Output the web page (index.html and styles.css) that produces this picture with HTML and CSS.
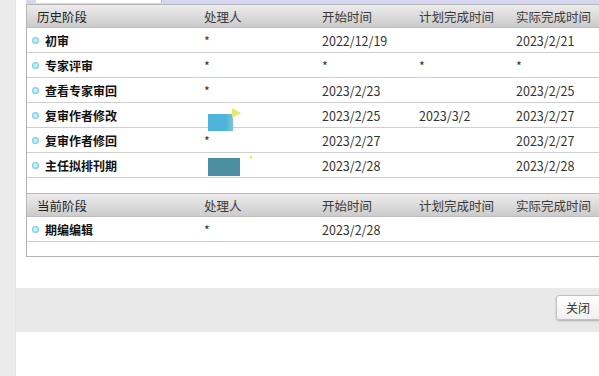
FILE: index.html
```html
<!DOCTYPE html>
<html lang="zh">
<head>
<meta charset="utf-8">
<link rel="stylesheet" href="styles.css">
</head>
<body>
<div class="page">
  <div class="side"></div>
  <div class="main">
    <div class="topbar"><div class="tab"></div></div>
    <div class="panel">
      <div class="row head">
        <div class="c1">历史阶段</div><div class="c2">处理人</div><div class="c3">开始时间</div><div class="c4">计划完成时间</div><div class="c5">实际完成时间</div>
      </div>
      <div class="row">
        <div class="c1 stage"><span class="dot"></span>初审</div><div class="c2">*</div><div class="c3">2022/12/19</div><div class="c4"></div><div class="c5">2023/2/21</div>
      </div>
      <div class="row">
        <div class="c1 stage"><span class="dot"></span>专家评审</div><div class="c2">*</div><div class="c3">*</div><div class="c4">*</div><div class="c5">*</div>
      </div>
      <div class="row">
        <div class="c1 stage"><span class="dot"></span>查看专家审回</div><div class="c2">*</div><div class="c3">2023/2/23</div><div class="c4"></div><div class="c5">2023/2/25</div>
      </div>
      <div class="row">
        <div class="c1 stage"><span class="dot"></span>复审作者修改</div><div class="c2"></div><div class="c3">2023/2/25</div><div class="c4">2023/3/2</div><div class="c5">2023/2/27</div>
      </div>
      <div class="row">
        <div class="c1 stage"><span class="dot"></span>复审作者修回</div><div class="c2">*</div><div class="c3">2023/2/27</div><div class="c4"></div><div class="c5">2023/2/27</div>
      </div>
      <div class="row">
        <div class="c1 stage"><span class="dot"></span>主任拟排刊期</div><div class="c2"></div><div class="c3">2023/2/28</div><div class="c4"></div><div class="c5">2023/2/28</div>
      </div>
      <div class="gap"></div>
      <div class="row head">
        <div class="c1">当前阶段</div><div class="c2">处理人</div><div class="c3">开始时间</div><div class="c4">计划完成时间</div><div class="c5">实际完成时间</div>
      </div>
      <div class="row">
        <div class="c1 stage"><span class="dot"></span>期编编辑</div><div class="c2">*</div><div class="c3">2023/2/28</div><div class="c4"></div><div class="c5"></div>
      </div>
      <div class="gap2"></div>
      <div class="blob b1"></div>
      <div class="tri t1"></div>
      <div class="blob b2"></div>
      <div class="tri t2"></div>
    </div>
    <div class="spacer"></div>
    <div class="footer"><button class="btn">关闭</button></div>
  </div>
</div>
</body>
</html>
```
FILE: styles.css
```css
* { box-sizing: border-box; }
html, body { margin: 0; padding: 0; background: #fff; overflow: hidden; }
body { font-family: "Noto Sans CJK SC", "Noto Sans", sans-serif; font-size: 12.5px; color: #333; }
.page { display: flex; width: 615px; height: 376px; }
.side { width: 16px; flex: none; background: #ebebeb; border-right: 1px solid #e2e2e2; }
.main { flex: 1; display: flex; flex-direction: column; }
.topbar { height: 4px; margin-left: 10px; background: #d6d6f0; padding-left: 10px; }
.tab { width: 126px; height: 3px; background: #fff; border-right: 1px solid #bbb; }
.panel { position: relative; margin-left: 10px; border: 1px solid #b4b4b4; border-right: none; background: #fff; }
.row { display: flex; height: 25px; align-items: center; border-bottom: 1px solid #cfcfcf; }
.row > div { flex: none; white-space: nowrap; }
.c1 { width: 177px; padding-left: 9px; }
.c2 { width: 118px; }
.c3 { width: 97px; }
.c4 { width: 97px; }
.c5 { width: 100px; }
.head { height: 23px; background: linear-gradient(#ececec, #cbcbcb); border-bottom: 1px solid #bdbdbd; color: #3a3a3a; font-size: 12.5px; }
.head .c1 { padding-left: 10px; color: #222; }
.stage { font-weight: bold; color: #111; display: flex; align-items: center; padding-left: 5px; font-size: 12px; }
.dot { width: 7px; height: 7px; border-radius: 50%; background: radial-gradient(circle, #c8f0f8 20%, #6cc8de 75%); margin-right: 6px; }
.gap { height: 16px; border-bottom: 1px solid #b8b8b8; }
.gap2 { height: 14px; }
.spacer { height: 31px; }
.footer { height: 44px; background: #e9e9e9; display: flex; justify-content: flex-end; align-items: flex-start; padding-top: 7px; }
.btn { width: 60px; height: 25px; font: inherit; font-size: 12px; color: #333; text-align: left; padding-left: 9px; background: linear-gradient(#ffffff, #f0f0f0); border: 1px solid #c2c2c2; border-radius: 3px; box-shadow: 0 1px 2px rgba(0,0,0,0.25); }
.blob { position: absolute; }
.b1 { left: 181px; top: 109px; width: 25px; height: 17px; background: linear-gradient(90deg, #4eb4dc 70%, #7bc3d8); }
.b2 { left: 181px; top: 153px; width: 32px; height: 18px; background: #4d8fa2; }
.tri { position: absolute; width: 0; height: 0; border-top: 5px solid transparent; border-bottom: 5px solid transparent; border-left: 9px solid #e4ea6a; }
.t1 { left: 205px; top: 103px; }
.t2 { left: 223px; top: 150px; border-top-width: 2px; border-bottom-width: 2px; border-left-width: 3px; }
```
